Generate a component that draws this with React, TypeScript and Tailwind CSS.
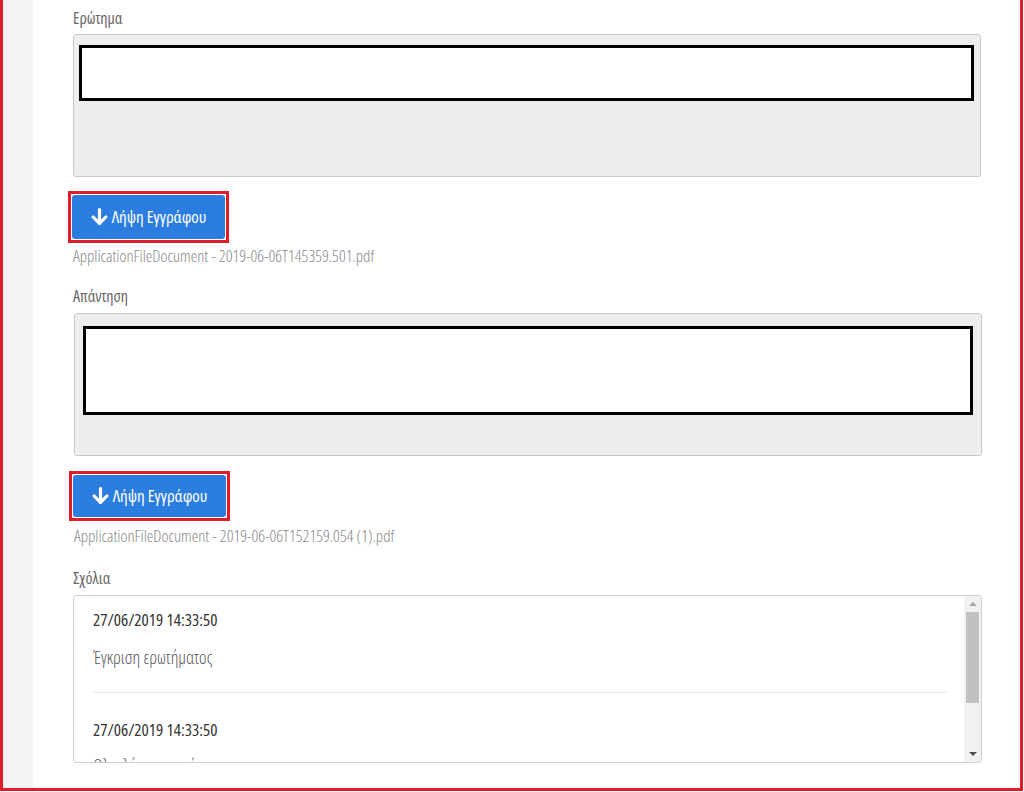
import React from "react";

const font = { fontFamily: '"Open Sans", "Noto Sans", sans-serif' };

function DownArrow() {
  return (
    <svg width="17" height="18" viewBox="0 0 16 17" fill="none" className="mr-[4px]">
      <path d="M8 1.5V14.5" stroke="white" strokeWidth="3" strokeLinecap="round" />
      <path d="M2 8.5L8 14.5L14 8.5" stroke="white" strokeWidth="3" strokeLinecap="round" strokeLinejoin="round" />
    </svg>
  );
}

function DownloadButton({ h }: { h: number }) {
  return (
    <div className="w-[161px] border-[3px] border-[#e11d2a] p-[1px]">
      <button
        className="w-full flex items-center justify-center rounded-[3px] bg-[#2c7de0] text-white text-[17px] font-stretch-[75%]"
        style={{ height: h }}
      >
        <DownArrow />
        <span>Λήψη Εγγράφου</span>
      </button>
    </div>
  );
}

function Label({ children }: { children: React.ReactNode }) {
  return <div className="h-[20px] leading-[20px] text-[16px] text-[#666] font-stretch-[75%]">{children}</div>;
}

export default function App() {
  return (
    <div className="w-[1024px] h-[792px] bg-white overflow-hidden" style={font}>
      <div className="w-[1023px] h-[791px] border-l-[3px] border-r-[3px] border-b-[3px] border-[#e11d2a] flex">
        <div className="w-[30px] h-full bg-[#f4f4f4]" />
        <div className="flex-1 pl-[40px] pt-[8px]">
          <Label>Ερώτημα</Label>
          <div className="mt-[6px] w-[908px] h-[143px] bg-[#eeeeee] border border-[#c9c9c9] rounded-[3px] pl-[5px] pt-[10px]">
            <div className="w-[895px] h-[56px] bg-white border-[3px] border-black" />
          </div>
          <div className="mt-[14px] -ml-[5px]">
            <DownloadButton h={44} />
          </div>
          <div className="mt-[4px] h-[18px] leading-[18px] text-[16.7px] font-light text-[#888] font-stretch-[75%]">
            ApplicationFileDocument - 2019-06-06T145359.501.pdf
          </div>
          <div className="mt-[21px]">
            <Label>Απάντηση</Label>
          </div>
          <div className="mt-[7px] ml-[1px] w-[908px] h-[143px] bg-[#eeeeee] border border-[#c9c9c9] rounded-[3px] pl-[8px] pt-[12px]">
            <div className="w-[890px] h-[89px] bg-white border-[3px] border-black" />
          </div>
          <div className="mt-[15px] -ml-[4px]">
            <DownloadButton h={42} />
          </div>
          <div className="mt-[6px] ml-[1px] h-[18px] leading-[18px] text-[16.7px] font-light text-[#888] font-stretch-[75%]">
            ApplicationFileDocument - 2019-06-06T152159.054 (1).pdf
          </div>
          <div className="mt-[23px]">
            <Label>Σχόλια</Label>
          </div>
          <div className="mt-[7px] w-[909px] h-[168px] border border-[#cfcfcf] rounded-[3px] flex overflow-hidden">
            <div className="flex-1 pl-[19px] pr-[17px] overflow-hidden">
              <div className="pt-[12px] h-[24px] leading-[24px] text-[17px] text-[#333] font-stretch-[75%] box-content">
                27/06/2019 14:33:50
              </div>
              <div className="mt-[14px] h-[22px] leading-[22px] text-[18px] font-light text-[#555] font-stretch-[75%]">
                Έγκριση ερωτήματος
              </div>
              <div className="mt-[24px] border-t border-[#e6e6e6]" />
              <div className="mt-[25px] h-[24px] leading-[24px] text-[17px] text-[#333] font-stretch-[75%]">
                27/06/2019 14:33:50
              </div>
              <div className="mt-[12px] h-[22px] leading-[22px] text-[18px] font-light text-[#555] font-stretch-[75%]">
                Ολοκλήρωση απάντησης
              </div>
            </div>
            <div className="w-[17px] h-full bg-[#f1f1f1] flex flex-col items-center">
              <div className="h-[16px] w-full flex items-center justify-center">
                <div className="w-0 h-0 border-l-[4px] border-r-[4px] border-b-[4px] border-l-transparent border-r-transparent border-b-[#a3a3a3]" />
              </div>
              <div className="w-[13px] h-[91px] bg-[#c1c1c1]" />
              <div className="flex-1" />
              <div className="h-[16px] w-full flex items-center justify-center">
                <div className="w-0 h-0 border-l-[4px] border-r-[4px] border-t-[4px] border-l-transparent border-r-transparent border-t-[#505050]" />
              </div>
            </div>
          </div>
        </div>
      </div>
    </div>
  );
}
